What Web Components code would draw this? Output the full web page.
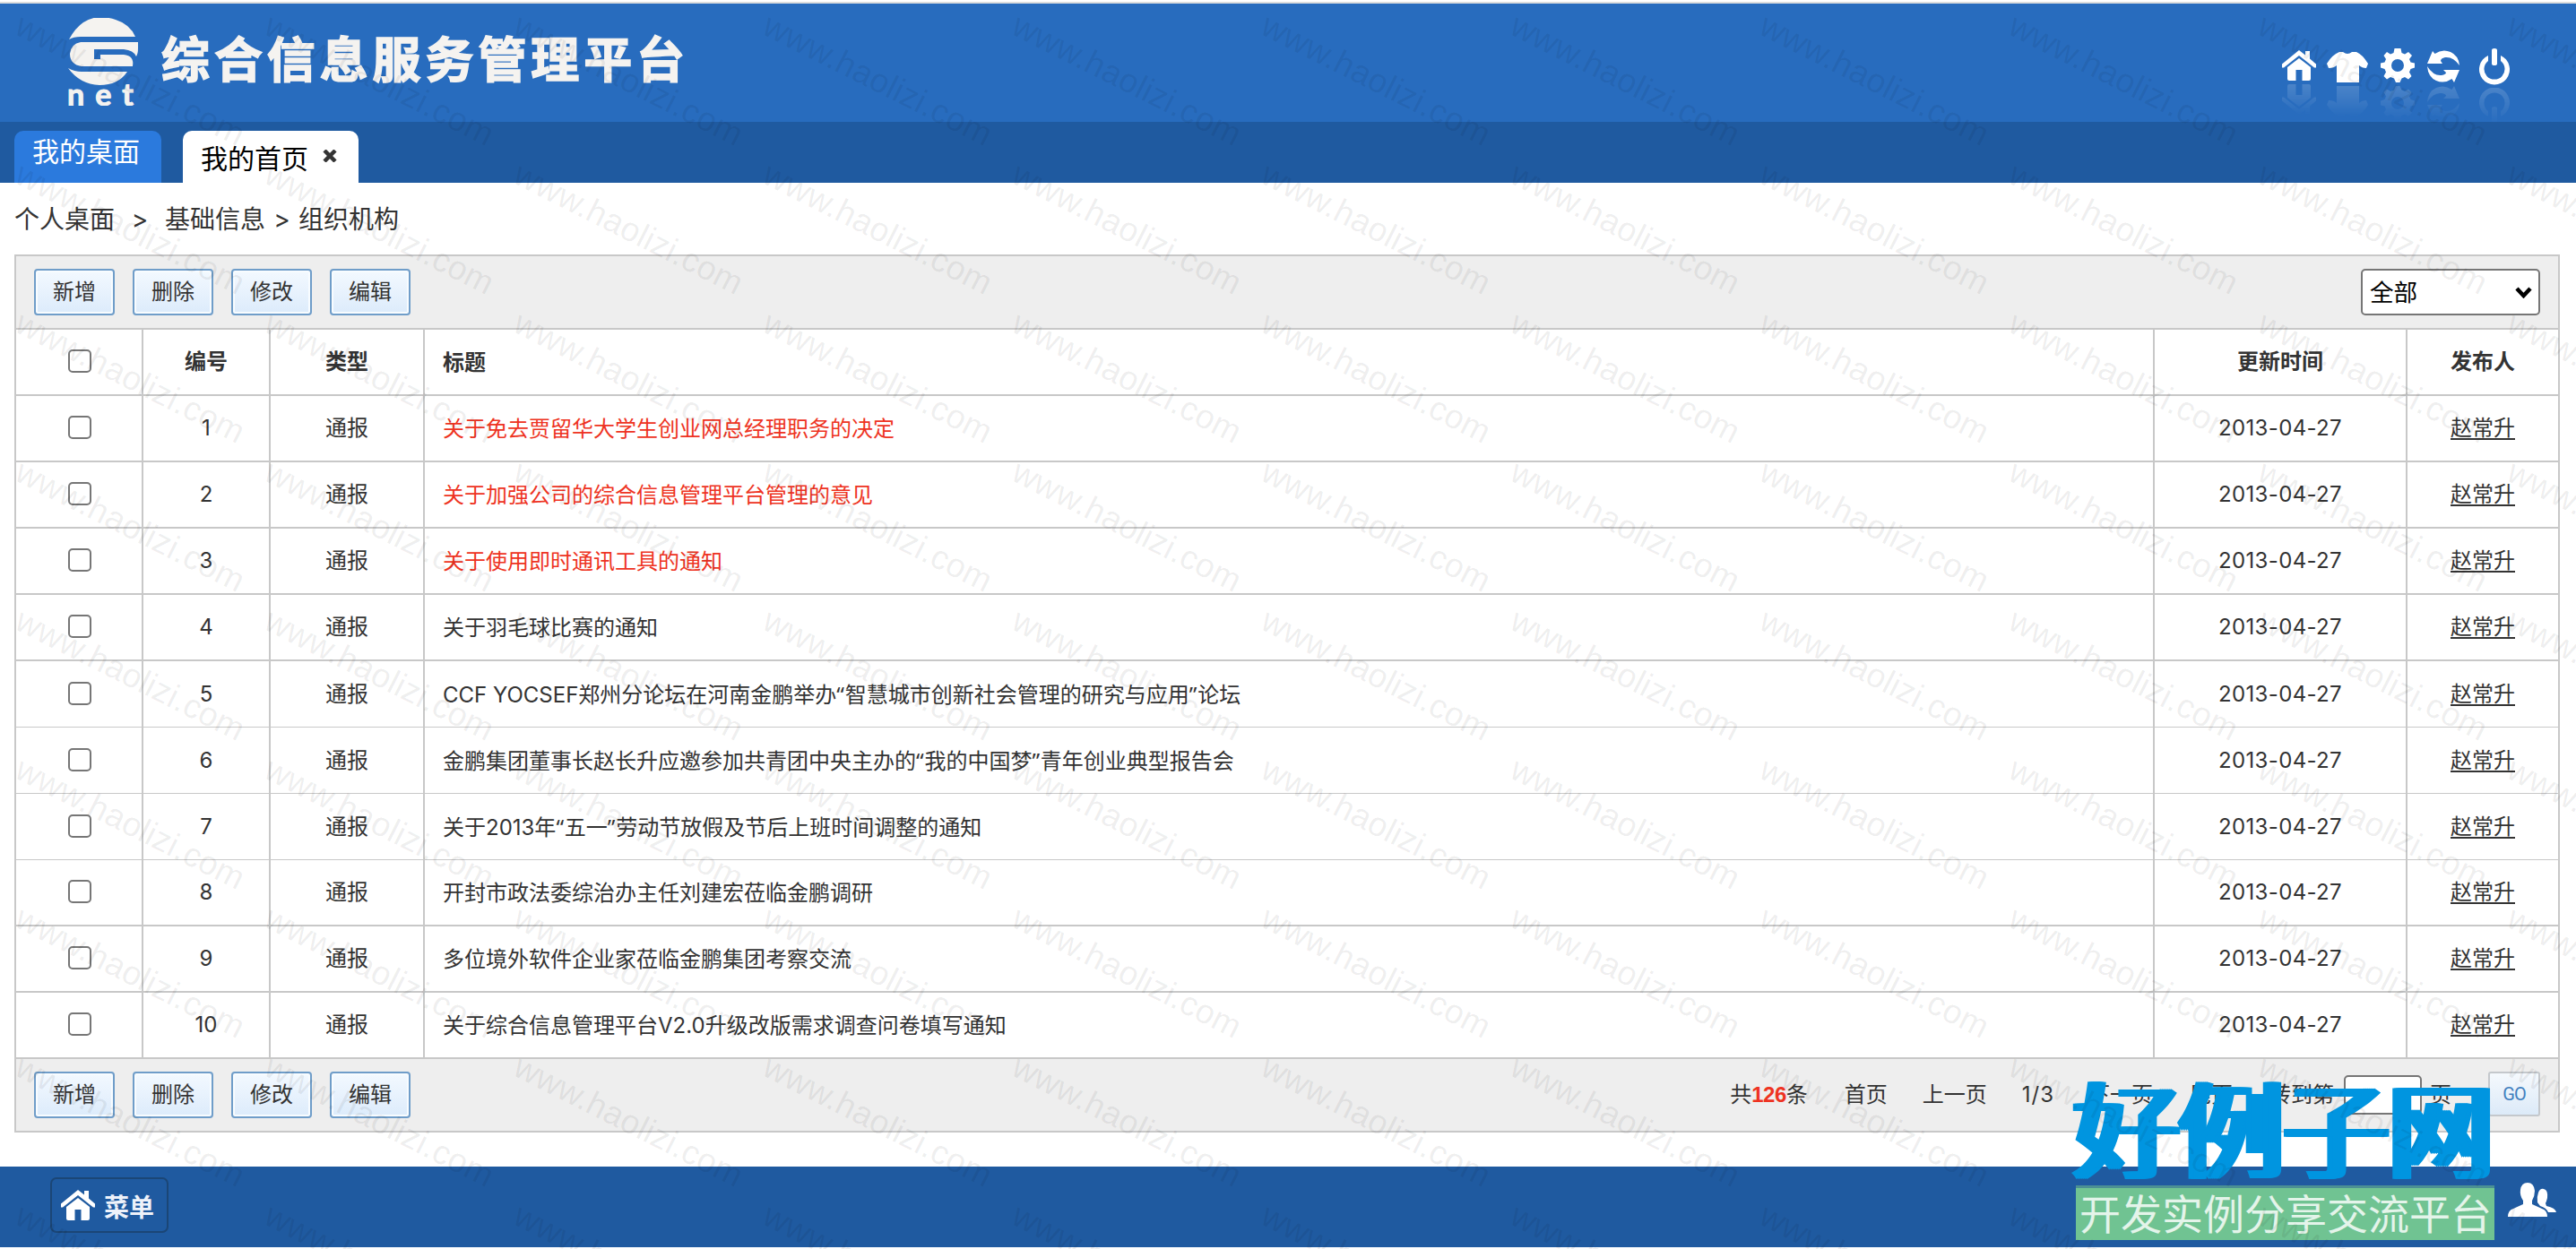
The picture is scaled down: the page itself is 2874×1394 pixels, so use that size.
<!DOCTYPE html>
<html lang="zh-CN">
<head>
<meta charset="utf-8">
<title>综合信息服务管理平台</title>
<style>
  body {
    margin: 0;
    height: 1394px;
    overflow: hidden;
    position: relative;
    background: #fff;
    color: #333;
    font: 24px/1.2 Inter, "Noto Sans CJK SC", sans-serif;
  }
</style>
</head>
<body>
<app-header heading="综合信息服务管理平台"></app-header>
<tab-bar>
  <tab-item>我的桌面</tab-item>
  <tab-item active>我的首页</tab-item>
</tab-bar>
<bread-crumb></bread-crumb>
<data-panel>
  <tool-bar slot="top"><drop-down>全部</drop-down></tool-bar>
  <data-table></data-table>
  <tool-bar slot="bottom"><page-nav></page-nav></tool-bar>
</data-panel>
<app-footer>菜单</app-footer>
<site-badge></site-badge>
<text-watermark text="www.haolizi.com"></text-watermark>

<script>
const icons = {
  home: ['0 0 38 34', '<path d="M19 0 26 5.500V1H31V9.500L38 15.500V19.500H36L19 6 2 19.500H0V15.500Z"/><path d="M19 9 32 19V32Q32 34 30 34H22.500V22H15.500V34H8Q6 34 6 32V19Z"/>'],
  shirt: ['0 0 46 34', '<path d="M14 0H18Q23 4 28 0H33Q40 3 46 13L44 18Q39 18 36 15V34H11V15Q8 18 2 18L0 13Q6 3 14 0Z"/>'],
  gear: ['0 0 38 38', '<g fill-rule="evenodd"><path d="M15.500 0H22.500L23.500 5 27 6.500 31 4 35 8 32 12 33.500 15.500 38 16.500V21.500L33.500 23 32 26.500 34.500 31 31 34.500 27 32 23.500 33.500 21.500 38H17L15 33.500 11 32 7 34.500 3.500 31 6 26.500 4.500 23 0 21.500V16.500L4.500 15.500 6 12 3.500 8 7 4 11 6.500 14.500 5ZM19 12A7 7 0 1 0 19 26A7 7 0 1 0 19 12Z"/></g>'],
  refresh: ['0 0 36 36', '<path d="M6 1 8.500 4Q17-2 26 2Q35 6 36 17Q29 7 20 8Q15 9 15 12L17 15H0Z"/><path d="M30 36 27.500 32Q19 38 10 34Q1 30 0 18Q7 29 16 28Q21 27 21 25L18 22H36Z"/>'],
  power: ['0 0 34 40', '<path d="M14 2Q14 0 17 0T20 2V17Q20 19 17 19T14 17Z"/><path d="M10 8A17 17 0 1 0 24 8L24 14A11.500 11.500 0 1 1 10 14Z"/>'],
  users: ['0 0 54 38', '<path d="M33 22Q32 16 34 11Q36 6 40 7Q45 8 44 17Q43 21 42 23L43 26Q53 28 54 33H45Q43 28 36 26Z"/><path d="M22 0Q29 0 30 9Q30 15 27 20V24L38 29Q44 31 44 38H0Q0 31 6 29L17 24V20Q13 14 14 8Q15 0 22 0Z"/>']
};

class SvgIcon extends HTMLElement {
  connectedCallback() {
    const [box, shape] = icons[this.getAttribute('name')];
    const [, , w, h] = box.split(' ');
    this.attachShadow({ mode: 'open' }).innerHTML = `
      <style>
        :host { display: block; width: ${w}px; height: ${h}px; color: #fff; flex: none; }
        svg { display: block; overflow: visible; }
        .mirror {
          transform: scaleY(-1);
          margin-top: 4px;
          opacity: .16;
          -webkit-mask-image: linear-gradient(transparent, #000);
        }
      </style>
      <svg width="${w}" height="${h}" viewBox="${box}" fill="currentColor">${shape}</svg>
      ${this.hasAttribute('mirror') ? `<svg class="mirror" width="${w}" height="${h}" viewBox="${box}" fill="currentColor">${shape}</svg>` : ''}
    `;
  }
}

class AppHeader extends HTMLElement {
  connectedCallback() {
    this.attachShadow({ mode: 'open' }).innerHTML = `
      <style>
        :host {
          display: flex;
          box-sizing: border-box;
          height: 136px;
          padding: 14px 74px 0 76px;
          background: linear-gradient(#fff 2px, #ddd 2px, #ddd 4px, #286cbe 4px);
          color: #f5f3f0;
        }
        .logo { display: block; margin-top: 6px; }
        h1 {
          height: 78px;
          margin: 11px 0 0 24px;
          font: bold 54px/78px "Noto Sans CJK SC", sans-serif;
          letter-spacing: 4.900px;
          -webkit-text-stroke: 1.500px #f5f3f0;
        }
        nav { display: flex; margin-left: auto; align-items: flex-start; }
      </style>
      <svg class="logo" width="80" height="98" viewBox="0 0 80 98" fill="currentColor">
        <path d="M1 24Q8 11 17 5Q32-5 53 2Q69 7 75 21H14Q6 21 1 24Z"/>
        <path d="M14 27H78V34Q78 40 76 43Q73 36 62 35H29V46H36V41H62Q74 42 72 54H15Q2 52 2 40Q3 29 14 27Z"/>
        <path d="M0 56Q7 60 15 60H66Q56 75 35 75Q13 74 0 56Z"/>
        <text x="-1" y="98" font-family="Lato" font-weight="bold" font-size="34" textLength="74" stroke="currentColor">net</text>
      </svg>
      <h1>${this.getAttribute('heading')}</h1>
      <nav>
        <svg-icon mirror name="home" style="margin: 42px 12px 0 0"></svg-icon>
        <svg-icon mirror name="shirt" style="margin: 44px 14px 0 0"></svg-icon>
        <svg-icon mirror name="gear" style="margin: 40px 14px 0 0"></svg-icon>
        <svg-icon mirror name="refresh" style="margin: 42px 22px 0 0"></svg-icon>
        <svg-icon mirror name="power" style="margin: 40px 0 0 0"></svg-icon>
      </nav>
    `;
  }
}

class TabBar extends HTMLElement {
  connectedCallback() {
    this.attachShadow({ mode: 'open' }).innerHTML = `
      <style>
        :host {
          display: flex;
          box-sizing: border-box;
          gap: 24px;
          height: 68px;
          padding: 10px 16px 0;
          background: #1f5aa0;
        }
      </style>
      <slot></slot>
    `;
  }
}

class TabItem extends HTMLElement {
  connectedCallback() {
    const active = this.hasAttribute('active');
    this.attachShadow({ mode: 'open' }).innerHTML = `
      <style>
        :host {
          display: flex;
          box-sizing: border-box;
          width: 164px;
          padding-left: 20px;
          height: 58px;
          border-radius: 10px 10px 0 0;
          background: #2b7add;
          color: #fff;
          font-size: 30px;
          line-height: 47px;
        }
        :host([active]) { width: 196px; background: #fff; color: #000; line-height: 63px; }
        svg { margin: 21px 0 0 16px; }
      </style>
      <slot></slot>
      ${active ? '<svg width="16" height="14" viewBox="0 0 16 14"><path d="M2 1 14 13M14 1 2 13" stroke="#333" stroke-width="4.500"/></svg>' : ''}
    `;
  }
}

class BreadCrumb extends HTMLElement {
  connectedCallback() {
    this.attachShadow({ mode: 'open' }).innerHTML = `
      <style>
        :host { display: flex; height: 80px; padding-left: 16px; font-size: 28px; line-height: 82px; }
        i { font-style: normal; width: 56px; text-align: center; }
        i + span + i { width: 37px; }
      </style>
      <span>个人桌面</span><i>&gt;</i><span>基础信息</span><i>&gt;</i><span>组织机构</span>
    `;
  }
}

class DataPanel extends HTMLElement {
  connectedCallback() {
    this.attachShadow({ mode: 'open' }).innerHTML = `
      <style>
        :host { display: block; margin: 0 18px 0 16px; border: 2px solid #c8c8c8; }
      </style>
      <slot name="top"></slot>
      <slot></slot>
      <slot name="bottom"></slot>
    `;
  }
}

class ToolBar extends HTMLElement {
  connectedCallback() {
    const labels = ['新增', '删除', '修改', '编辑'];
    this.attachShadow({ mode: 'open' }).innerHTML = `
      <style>
        :host {
          display: flex;
          box-sizing: border-box;
          gap: 20px;
          height: 80px;
          padding: 14px 20px;
          background: #eee;
        }
        button {
          box-sizing: border-box;
          width: 90px;
          height: 52px;
          padding: 0;
          border: 2px solid #6f9dc9;
          border-radius: 4px;
          background: linear-gradient(#f3f9ff, #dcebfb);
          box-shadow: inset 0 0 0 2px #f8fcff;
          color: #333;
          font: inherit;
        }
      </style>
      ${labels.map(label => `<button>${label}</button>`).join('')}
      <slot></slot>
    `;
  }
}

class DropDown extends HTMLElement {
  connectedCallback() {
    this.attachShadow({ mode: 'open' }).innerHTML = `
      <style>
        :host {
          display: flex;
          box-sizing: border-box;
          justify-content: space-between;
          align-items: center;
          width: 200px;
          height: 52px;
          margin-left: auto;
          padding: 1px 7px 0 8px;
          border: 2px solid #767676;
          border-radius: 5px;
          background: #fff;
          color: #000;
          font-size: 26.600px;
        }
      </style>
      <slot></slot>
      <svg width="19" height="13" viewBox="0 0 19 13" fill="none"><path d="M2 2 9.500 10 17 2" stroke="#000" stroke-width="4.500"/></svg>
    `;
  }
}

class DataTable extends HTMLElement {
  connectedCallback() {
    const rows = [
      ['关于免去贾留华大学生创业网总经理职务的决定', true],
      ['关于加强公司的综合信息管理平台管理的意见', true],
      ['关于使用即时通讯工具的通知', true],
      ['关于羽毛球比赛的通知'],
      ['CCF YOCSEF郑州分论坛在河南金鹏举办“智慧城市创新社会管理的研究与应用”论坛'],
      ['金鹏集团董事长赵长升应邀参加共青团中央主办的“我的中国梦”青年创业典型报告会'],
      ['关于2013年“五一”劳动节放假及节后上班时间调整的通知'],
      ['开封市政法委综治办主任刘建宏莅临金鹏调研'],
      ['多位境外软件企业家莅临金鹏集团考察交流'],
      ['关于综合信息管理平台V2.0升级改版需求调查问卷填写通知']
    ];
    this.attachShadow({ mode: 'open' }).innerHTML = `
      <style>
        :host { display: block; border-block: 2px solid #c8c8c8; }
        .row {
          display: grid;
          grid-template-columns: 140px 140px 170px 1fr 280px 168px;
          gap: 2px;
          height: 72px;
          background: #c8c8c8;
        }
        .row + .row { border-top: 2px solid #c8c8c8; }
        .row > * { display: flex; align-items: center; justify-content: center; padding-top: 1px; background: #fff; }
        .row > .title { display: block; padding-left: 20px; line-height: 71px; white-space: pre; }
        .head { font-weight: bold; }
        .red { color: #ee3322; }
        .date { letter-spacing: .350px; }
        /* quotes narrower than a full CJK cell */
        .quote { font-family: "Noto Sans", sans-serif; letter-spacing: .800px; }
        u { text-underline-offset: 3px; text-decoration-thickness: 2px; }
        input {
          appearance: none;
          box-sizing: border-box;
          width: 26px;
          height: 26px;
          margin: 0 0 3px 2px;
          border: 2px solid #767676;
          border-radius: 5px;
          background: #fff;
        }
      </style>
      <div class="row head">
        <div><input type="checkbox"></div><div>编号</div><div>类型</div>
        <div class="title">标题</div><div>更新时间</div><div>发布人</div>
      </div>
      ${rows.map(([title, red], i) => `
        <div class="row">
          <div><input type="checkbox"></div><div>${i + 1}</div><div>通报</div>
          <div class="title${red ? ' red' : ''}">${title.replace(/[“”]/g, '<span class="quote">$&</span>')}</div>
          <div class="date">2013-04-27</div><div><u>赵常升</u></div>
        </div>`).join('')}
    `;
  }
}

class PageNav extends HTMLElement {
  connectedCallback() {
    this.attachShadow({ mode: 'open' }).innerHTML = `
      <style>
        :host { display: flex; margin-left: auto; line-height: 52px; white-space: nowrap; }
        span { margin-right: 41px; }
        b { color: #ee3322; font-family: "Liberation Sans"; letter-spacing: -.500px; }
        .near { margin-right: 39px; }
        .count { margin-right: 38px; letter-spacing: 1px; }
        .last { margin-right: 11px; }
        input {
          box-sizing: border-box;
          width: 87px;
          height: 44px;
          margin: 4px 9px 0 0;
          border: 2px solid #767676;
          border-radius: 5px;
          background: #fff;
        }
        button {
          box-sizing: border-box;
          width: 58px;
          height: 50px;
          padding: 0;
          border: 2px solid #c4c8cc;
          border-radius: 3px;
          background: linear-gradient(#f5f9fd, #dceaf8);
          color: #4180bf;
          font: 20px Roboto, sans-serif;
          letter-spacing: -1px;
        }
      </style>
      <span>共<b>126</b>条</span><span class="near">首页</span><span class="near">上一页</span><span class="count">1/3</span>
      <span>下一页</span><span>尾页</span><span class="last">转到第</span>
      <input><span>页</span><button>GO</button>
    `;
  }
}

class AppFooter extends HTMLElement {
  connectedCallback() {
    this.attachShadow({ mode: 'open' }).innerHTML = `
      <style>
        :host {
          display: flex;
          box-sizing: border-box;
          justify-content: space-between;
          height: 90px;
          margin-top: 38px;
          padding: 12px 22px 0 56px;
          background: #1f5aa0;
          color: #eef2fa;
        }
        .menu {
          display: flex;
          box-sizing: border-box;
          gap: 10px;
          width: 132px;
          height: 62px;
          padding: 12px 0 0 10px;
          border: 2px solid #1b4676;
          border-radius: 7px;
          font: bold 28px/36px "Noto Sans CJK SC", sans-serif;
        }
      </style>
      <div class="menu"><svg-icon name="home"></svg-icon><slot></slot></div>
      <svg-icon name="users" style="margin-top: 6px"></svg-icon>
    `;
  }
}

// floats over the lower right corner
class SiteBadge extends HTMLElement {
  connectedCallback() {
    this.attachShadow({ mode: 'open' }).innerHTML = `
      <style>
        :host { position: absolute; left: 2314px; top: 1194px; width: 470px; font-family: "Noto Sans CJK SC", sans-serif; white-space: nowrap; }
        .name {
          height: 129px;
          font-size: 117px;
          line-height: 122px;
          color: #0095e0;
          /* sideways shadows thicken the vertical strokes only */
          text-shadow: -6px 0, -4px 0, -2px 0, 2px 0, 4px 0, 6px 0;
        }
        .slogan {
          box-sizing: border-box;
          width: 467px;
          height: 61px;
          margin-left: 2px;
          padding-left: 4px;
          border-top: 3px solid #4b9094;
          background: #70c392;
          color: #e4f4ea;
          font-size: 46px;
          line-height: 53px;
        }
      </style>
      <div class="name">好例子网</div>
      <div class="slogan">开发实例分享交流平台</div>
    `;
  }
}

class TextWatermark extends HTMLElement {
  connectedCallback() {
    const tile = `<span>${this.getAttribute('text')}</span>`;
    this.attachShadow({ mode: 'open' }).innerHTML = `
      <style>
        :host {
          position: absolute;
          inset: 0;
          display: grid;
          grid-template-columns: repeat(11, 278px);
          grid-auto-rows: 166px;
          overflow: hidden;
          pointer-events: none;
          color: rgba(0, 0, 0, .075);
          font: 37.500px/40px "Liberation Sans", sans-serif;
          letter-spacing: .250px;
        }
        span { height: 40px; margin: 4px 0 0 14px; white-space: nowrap; transform: rotate(26.800deg); transform-origin: 0 34px; }
      </style>
      ${tile.repeat(99)}
    `;
  }
}

customElements.define('svg-icon', SvgIcon);
customElements.define('app-header', AppHeader);
customElements.define('tab-bar', TabBar);
customElements.define('tab-item', TabItem);
customElements.define('bread-crumb', BreadCrumb);
customElements.define('data-panel', DataPanel);
customElements.define('tool-bar', ToolBar);
customElements.define('drop-down', DropDown);
customElements.define('data-table', DataTable);
customElements.define('page-nav', PageNav);
customElements.define('app-footer', AppFooter);
customElements.define('site-badge', SiteBadge);
customElements.define('text-watermark', TextWatermark);
</script>
</body>
</html>
